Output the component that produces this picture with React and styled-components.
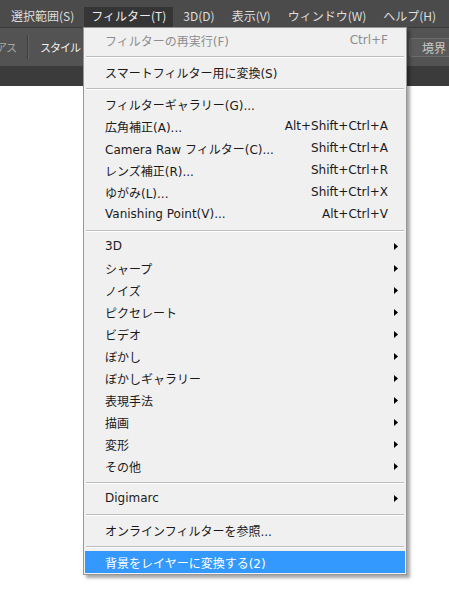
import React from 'react'
import styled, { createGlobalStyle } from 'styled-components'

const GlobalStyle = createGlobalStyle`
  html, body {
    margin: 0;
    padding: 0;
    background: #ffffff;
  }
  body {
    font-family: "DejaVu Sans", "Noto Sans CJK JP", sans-serif;
    font-size: 12px;
  }
`

const Page = styled.div`
  position: relative;
  width: 449px;
  height: 591px;
  overflow: hidden;
  background: #ffffff;
`

const MenuBar = styled.div`
  display: flex;
  align-items: flex-end;
  height: 27px;
  padding-left: 4px;
  gap: 3px;
  background: #4b4b4b;
  border-bottom: 1px solid #3a3a3a;
  font-family: "Noto Sans CJK JP", sans-serif;
`

const BarItem = styled.div`
  height: 20px;
  line-height: 18px;
  padding: 0 7px;
  color: ${p => (p.$open ? '#ececec' : '#dedede')};
  background: ${p => (p.$open ? '#353535' : 'transparent')};
  white-space: nowrap;
`

const Toolbar = styled.div`
  display: flex;
  align-items: center;
  height: 38px;
  background: #535353;
  color: #e6e6e6;
  font-family: "Noto Sans CJK JP", sans-serif;
`

const ToolText = styled.span`
  font-size: 11px;
  letter-spacing: -1px;
  color: ${p => (p.$dim ? '#a9a9a9' : '#f2f2f2')};
  margin-left: ${p => p.$left || 0}px;
`

const ToolDivider = styled.div`
  width: 1px;
  height: 24px;
  margin-left: 11px;
  background: #3e3e3e;
  border-right: 1px solid #626262;
`

const ToolButton = styled.div`
  margin-left: auto;
  margin-right: -14px;
  height: 17px;
  padding: 0 16px 0 12px;
  border: 1px solid #6c6c6c;
  border-radius: 3px;
  background: #5a5a5a;
  color: #c9c9c9;
  line-height: 17px;
`

const Strip = styled.div`
  height: 20px;
  background: #3b3b3b;
`

const Dropdown = styled.div`
  position: absolute;
  left: 83px;
  top: 27px;
  width: 320px;
  padding: 1px;
  background: #f0f0f0;
  border: 1px solid #979797;
  box-shadow: 3px 3px 3px rgba(0, 0, 0, 0.35);
`

const Item = styled.div`
  display: flex;
  align-items: center;
  justify-content: space-between;
  height: 22px;
  padding: 0 ${p => (p.$sub ? 7 : 17)}px 0 20px;
  color: ${p => (p.$active ? '#ffffff' : p.$disabled ? '#8d8d8d' : '#1a1a1a')};
  background: ${p => (p.$active ? '#3399ff' : 'transparent')};
  white-space: nowrap;
`

const Shortcut = styled.span`
  color: inherit;
`

const Separator = styled.div`
  height: 10px;
  display: flex;
  align-items: center;
  padding: 0 1px;

  &::before {
    content: '';
    flex: 1;
    height: 1px;
    background: #bdbdbd;
    box-shadow: 0 1px 0 #ffffff;
  }
`

const Arrow = () => (
  <svg width="4" height="7" viewBox="0 0 4 7">
    <path d="M0 0 L4 3.5 L0 7 Z" fill="#000" />
  </svg>
)

const menu = [
  { label: 'フィルターの再実行(F)', key: 'Ctrl+F', disabled: true },
  '-',
  { label: 'スマートフィルター用に変換(S)' },
  '-',
  { label: 'フィルターギャラリー(G)...' },
  { label: '広角補正(A)...', key: 'Alt+Shift+Ctrl+A' },
  { label: 'Camera Raw フィルター(C)...', key: 'Shift+Ctrl+A' },
  { label: 'レンズ補正(R)...', key: 'Shift+Ctrl+R' },
  { label: 'ゆがみ(L)...', key: 'Shift+Ctrl+X' },
  { label: 'Vanishing Point(V)...', key: 'Alt+Ctrl+V' },
  '-',
  { label: '3D', sub: true },
  { label: 'シャープ', sub: true },
  { label: 'ノイズ', sub: true },
  { label: 'ピクセレート', sub: true },
  { label: 'ビデオ', sub: true },
  { label: 'ぼかし', sub: true },
  { label: 'ぼかしギャラリー', sub: true },
  { label: '表現手法', sub: true },
  { label: '描画', sub: true },
  { label: '変形', sub: true },
  { label: 'その他', sub: true },
  '-',
  { label: 'Digimarc', sub: true },
  '-',
  { label: 'オンラインフィルターを参照...' },
  '-',
  { label: '背景をレイヤーに変換する(2)', active: true },
]

const bar = ['選択範囲(S)', 'フィルター(T)', '3D(D)', '表示(V)', 'ウィンドウ(W)', 'ヘルプ(H)']

export default function App() {
  return (
    <Page>
      <GlobalStyle />
      <MenuBar>
        {bar.map(b => (
          <BarItem key={b} $open={b === 'フィルター(T)'}>
            {b}
          </BarItem>
        ))}
      </MenuBar>
      <Toolbar>
        <ToolText $dim $left={-4}>アス</ToolText>
        <ToolDivider />
        <ToolText $left={11}>スタイル</ToolText>
        <ToolButton>境界</ToolButton>
      </Toolbar>
      <Strip />
      <Dropdown>
        {menu.map((m, i) =>
          m === '-' ? (
            <Separator key={i} />
          ) : (
            <Item key={i} $sub={m.sub} $active={m.active} $disabled={m.disabled}>
              <span>{m.label}</span>
              {m.key && <Shortcut>{m.key}</Shortcut>}
              {m.sub && <Arrow />}
            </Item>
          )
        )}
      </Dropdown>
    </Page>
  )
}
